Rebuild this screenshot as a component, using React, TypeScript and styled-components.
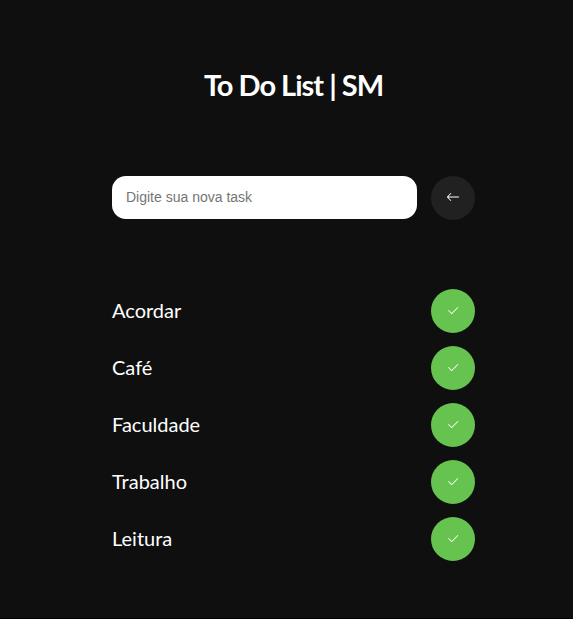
import React, { useState } from "react";
import styled, { createGlobalStyle } from "styled-components";
import { BsArrowLeft, BsCheck2 } from "react-icons/bs";

const GlobalStyle = createGlobalStyle`
  * {
    box-sizing: border-box;
    margin: 0;
    padding: 0;
  }

  body {
    background: #0f0f0f;
    color: #ffffff;
    font-family: Lato, sans-serif;
  }
`;

const Page = styled.main`
  min-height: 100vh;
  padding: 67px 98px 56px 112px;
  border-bottom: 1px solid #000000;
`;

const Title = styled.h1`
  font-size: 29px;
  line-height: 36px;
  font-weight: 700;
  letter-spacing: -1px;
  text-align: center;
`;

const TaskForm = styled.form`
  display: flex;
  gap: 14px;
  margin-top: 73px;
`;

const TaskInput = styled.input`
  flex: 1;
  min-width: 0;
  height: 43px;
  padding: 0 14px 2px;
  border: none;
  border-radius: 14px;
  outline: none;
  background: #ffffff;
  color: #0f0f0f;
  font-family: "Liberation Sans", Arial, sans-serif;
  font-size: 14px;

  &::placeholder {
    color: #757575;
  }
`;

const RoundButton = styled.button<{ $tone: "dark" | "green" }>`
  display: flex;
  align-items: center;
  justify-content: center;
  flex: none;
  width: 44px;
  height: 44px;
  padding-bottom: ${({ $tone }) => ($tone === "green" ? "0" : "2px")};
  border: none;
  border-radius: 50%;
  background: ${({ $tone }) => ($tone === "green" ? "#67c350" : "#212121")};
  color: #ffffff;
  font-size: 14px;
  cursor: pointer;
`;

const TaskList = styled.ul`
  display: flex;
  flex-direction: column;
  gap: 13px;
  margin-top: 69px;
  list-style: none;
`;

const TaskRow = styled.li`
  display: flex;
  align-items: center;
  justify-content: space-between;
`;

const TaskName = styled.span`
  padding-bottom: 2px;
  font-size: 20px;
  line-height: 24px;
`;

export default function App() {
  const [tasks, setTasks] = useState(["Acordar", "Café", "Faculdade", "Trabalho", "Leitura"]);
  const [draft, setDraft] = useState("");

  const addTask = (event: React.FormEvent) => {
    event.preventDefault();
    const name = draft.trim();
    if (!name) return;
    setTasks([...tasks, name]);
    setDraft("");
  };

  return (
    <>
      <GlobalStyle />
      <Page>
        <Title>To Do List | SM</Title>
        <TaskForm onSubmit={addTask}>
          <TaskInput
            type="text"
            aria-label="Nova task"
            placeholder="Digite sua nova task"
            value={draft}
            onChange={(event) => setDraft(event.target.value)}
          />
          <RoundButton $tone="dark" type="submit" aria-label="Adicionar task">
            <BsArrowLeft />
          </RoundButton>
        </TaskForm>
        <TaskList>
          {tasks.map((task, index) => (
            <TaskRow key={`${task}-${index}`}>
              <TaskName>{task}</TaskName>
              <RoundButton
                $tone="green"
                type="button"
                aria-label={`Concluir ${task}`}
                onClick={() => setTasks(tasks.filter((_, i) => i !== index))}
              >
                <BsCheck2 />
              </RoundButton>
            </TaskRow>
          ))}
        </TaskList>
      </Page>
    </>
  );
}
